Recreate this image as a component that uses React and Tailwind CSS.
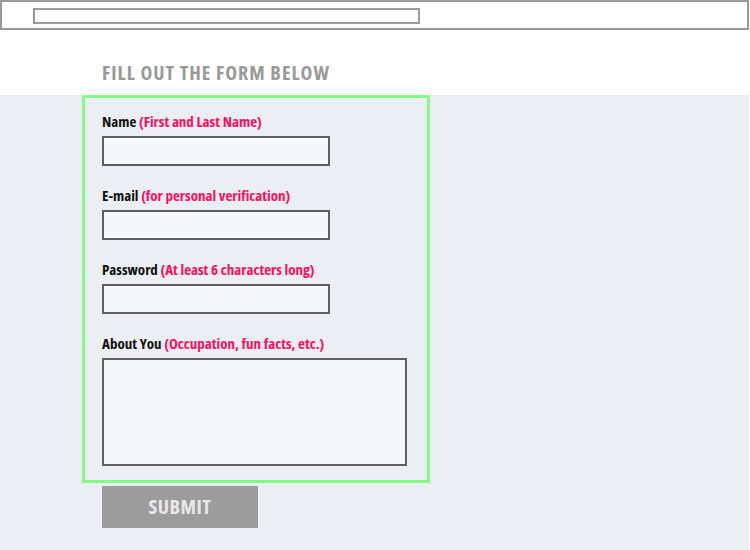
import React, { useState } from 'react';

const condensed = { fontFamily: '"Open Sans", "Liberation Sans", sans-serif', fontStretch: '75%' };

const fields = [
    { name: 'name', label: 'Name', hint: '(First and Last Name)', type: 'text' },
    { name: 'email', label: 'E-mail', hint: '(for personal verification)', type: 'email' },
    { name: 'password', label: 'Password', hint: '(At least 6 characters long)', type: 'password' },
];

const App = () => {
    const [data, setData] = useState({ name: '', email: '', password: '', about: '' });

    const handleChange = (e) => {
        const { name, value } = e.target;
        setData(prev => ({ ...prev, [name]: value }));
    };

    return (
        <div className="w-[749px] min-h-[550px] bg-white" style={condensed}>
            {/* top bar */}
            <div className="h-[30px] border-2 border-[#999999] pt-[6px] pl-[31px]">
                <div className="w-[387px] h-[16px] border-2 border-[#999999]"></div>
            </div>

            <div className="h-[65px] pt-[31px] pl-[102px]">
                <h2 className="text-[20px] leading-[24px] font-bold tracking-[1px] uppercase text-[#999999]">
                    Fill out the form below
                </h2>
            </div>

            <div className="min-h-[455px] bg-[#ebeef2] pl-[82px]">
                <form onSubmit={(e) => e.preventDefault()}>
                    <div className="w-[348px] h-[388px] border-[3px] border-[#80ff80] pt-[14px] pl-[17px]">
                        {fields.map((f) => (
                            <div key={f.name} className="mb-[20px]">
                                <label className="block text-[15px] leading-[18px] font-bold text-[#111111]">
                                    {f.label} <span className="text-[#ff0f5f]">{f.hint}</span>
                                </label>
                                <input
                                    type={f.type}
                                    name={f.name}
                                    value={data[f.name]}
                                    onChange={handleChange}
                                    className="block mt-[6px] w-[228px] h-[30px] border-2 border-[#5f5f5f] bg-[#f6f7f9] outline-none px-2 text-sm"
                                />
                            </div>
                        ))}
                        <div>
                            <label className="block text-[15px] leading-[18px] font-bold text-[#111111]">
                                About You <span className="text-[#ff0f5f]">(Occupation, fun facts, etc.)</span>
                            </label>
                            <textarea
                                name="about"
                                value={data.about}
                                onChange={handleChange}
                                className="block mt-[6px] w-[305px] h-[108px] border-2 border-[#5f5f5f] bg-[#f6f7f9] outline-none resize-none p-2 text-sm"
                            ></textarea>
                        </div>
                    </div>
                    <button
                        type="submit"
                        className="mt-[3px] ml-[20px] w-[156px] h-[42px] flex items-center justify-center bg-[#9c9c9c] text-[#e8e8e8] text-[20px] font-bold tracking-[0.5px] uppercase"
                    >
                        Submit
                    </button>
                </form>
            </div>
        </div>
    );
};

export default App;
